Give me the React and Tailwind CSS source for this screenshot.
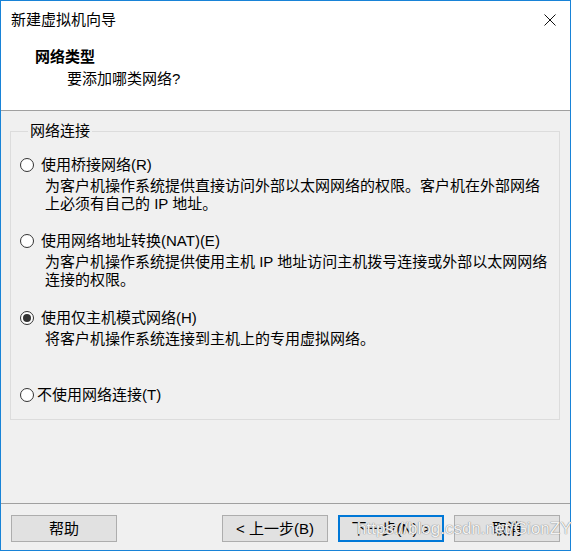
import React from 'react';

const font = '[font-family:"Liberation_Sans","Noto_Sans_CJK_SC",sans-serif]';

function Radio({ checked }) {
  return (
    <span className="w-[14px] h-[14px] rounded-full border border-[#333] bg-white flex items-center justify-center shrink-0">
      {checked && <span className="w-[8px] h-[8px] rounded-full bg-[#333]"></span>}
    </span>
  );
}

function Option({ label, lines, checked, gap = 'gap-[7px]', className = '' }) {
  return (
    <div className={className}>
      <div className={`flex items-center h-[18px] ${gap}`}>
        <Radio checked={checked} />
        <span className="leading-[18px]">{label}</span>
      </div>
      {lines && (
        <div className="mt-[3px] pl-[25px] leading-[18px]">
          {lines.map((l) => (
            <div key={l}>{l}</div>
          ))}
        </div>
      )}
    </div>
  );
}

function Button({ children, primary }) {
  return (
    <button
      className={`w-[106px] h-[27px] bg-[#e1e1e1] flex items-center justify-center leading-none ${
        primary ? 'border-2 border-[#0078d7]' : 'border border-[#adadad]'
      }`}
    >
      {children}
    </button>
  );
}

export default function App() {
  return (
    <div className={`w-[572px] h-[552px] bg-white text-black text-[15px] ${font}`}>
      <div className="relative w-[571px] h-[551px] border border-[#1883d7] flex flex-col">
        <div className="h-[110px] bg-white border-b border-[#a0a0a0] shrink-0">
          <div className="h-[38px] flex items-center justify-between pl-[10px] pr-[14px]">
            <span className="leading-[18px]">新建虚拟机向导</span>
            <svg width="12" height="12" viewBox="0 0 12 12">
              <path d="M0.5 0.5 L11.5 11.5 M11.5 0.5 L0.5 11.5" stroke="#111" strokeWidth="1" />
            </svg>
          </div>
          <div className="mt-[9px] pl-[34px] font-bold leading-[18px]">网络类型</div>
          <div className="mt-[4px] pl-[66px] leading-[18px]">要添加哪类网络?</div>
        </div>

        <div className="flex-1 bg-[#f0f0f0] flex flex-col">
          <fieldset className="mt-[11px] ml-[9px] w-[550px] h-[298px] border border-[#dcdcdc] pl-[9px]">
            <legend className="ml-[8px] px-[2px] leading-[18px]">网络连接</legend>
            <Option
              className="mt-[16px]"
              label="使用桥接网络(R)"
              lines={[
                '为客户机操作系统提供直接访问外部以太网网络的权限。客户机在外部网络',
                '上必须有自己的 IP 地址。',
              ]}
            />
            <Option
              className="mt-[19px]"
              label="使用网络地址转换(NAT)(E)"
              lines={[
                '为客户机操作系统提供使用主机 IP 地址访问主机拨号连接或外部以太网网络',
                '连接的权限。',
              ]}
            />
            <Option
              className="mt-[20px]"
              checked
              label="使用仅主机模式网络(H)"
              lines={['将客户机操作系统连接到主机上的专用虚拟网络。']}
            />
            <Option className="mt-[38px]" gap="gap-[3px]" label="不使用网络连接(T)" />
          </fieldset>

          <div className="flex-1"></div>

          <div className="h-[47px] border-t border-[#a0a0a0] pt-[11px] pl-[10px] pr-[10px] flex justify-between items-start">
            <Button>帮助</Button>
            <div className="flex gap-[10px]">
              <Button>&lt; 上一步(B)</Button>
              <Button primary>下一步(N) &gt;</Button>
              <Button>取消</Button>
            </div>
          </div>
        </div>

        <span className="absolute left-[356px] top-[518px] text-[17px] leading-[20px] text-white/90 [font-family:'Liberation_Sans',sans-serif] [text-shadow:0_0_1px_#777,0_0_1px_#999]">
          https://blog.csdn.net/GionZY
        </span>
      </div>
    </div>
  );
}
